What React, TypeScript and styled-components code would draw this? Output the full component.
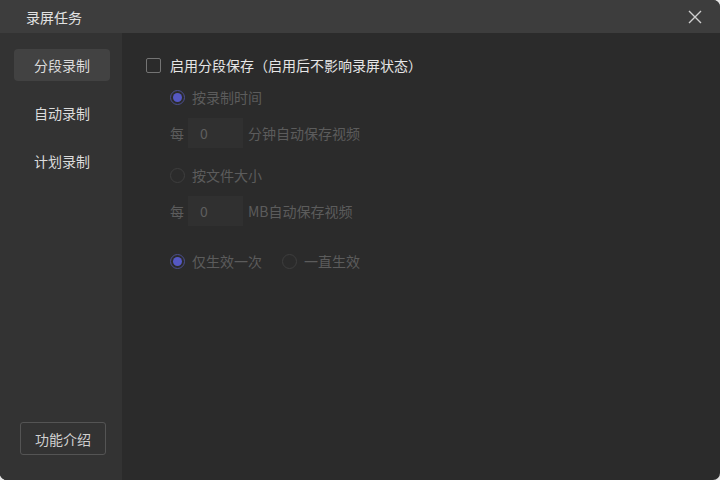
import React from "react";
import styled, { createGlobalStyle } from "styled-components";

const Global = createGlobalStyle`
  html, body {
    margin: 0;
    padding: 0;
    background: #e6e6e6;
  }
  body {
    font-family: "Noto Sans CJK SC", "Noto Sans", sans-serif;
    font-size: 14px;
  }
`;

const Window = styled.div`
  width: 720px;
  height: 480px;
  display: flex;
  flex-direction: column;
  background: #2b2b2b;
  border-radius: 0 7px 7px 7px;
  overflow: hidden;
  box-shadow: inset 2px 0 0 #262626;
`;

const TitleBar = styled.div`
  height: 33px;
  flex: none;
  display: flex;
  align-items: center;
  justify-content: space-between;
  padding: 0 15px 0 26px;
  background: #3d3d3d;
  color: #e2e2e2;
  font-size: 14px;
`;

const CloseButton = styled.button`
  width: 20px;
  height: 20px;
  padding: 0;
  border: none;
  background: transparent;
  display: flex;
  align-items: center;
  justify-content: center;
  cursor: pointer;
`;

const Body = styled.div`
  flex: 1;
  display: flex;
  min-height: 0;
`;

const Sidebar = styled.div`
  width: 122px;
  flex: none;
  background: #333333;
  display: flex;
  flex-direction: column;
  padding: 16px 0 25px 14px;
  box-sizing: border-box;
`;

const NavItem = styled.div<{ $active?: boolean }>`
  width: 96px;
  height: 32px;
  margin-bottom: 16px;
  border-radius: 4px;
  display: flex;
  align-items: center;
  justify-content: center;
  color: #dcdcdc;
  line-height: 30px;
  background: ${p => (p.$active ? "#424242" : "transparent")};
`;

const HelpButton = styled.button`
  margin-top: auto;
  margin-left: 6px;
  width: 86px;
  height: 33px;
  border: 1px solid #545454;
  border-radius: 3px;
  background: transparent;
  color: #d0d0d0;
  font: inherit;
  font-size: 14px;
`;

const Content = styled.div`
  flex: 1;
  padding: 23px 0 0 24px;
  display: flex;
  flex-direction: column;
`;

const CheckRow = styled.label`
  display: flex;
  align-items: center;
  height: 18px;
  color: #e6e6e6;
`;

const Box = styled.span`
  width: 13px;
  height: 13px;
  border: 1px solid #747474;
  border-radius: 2px;
  margin-right: 9px;
`;

const Group = styled.div`
  display: flex;
  flex-direction: column;
  padding-left: 24px;
  color: #5c5c5c;
`;

const RadioRow = styled.div<{ $top: number }>`
  display: flex;
  align-items: center;
  gap: 20px;
  height: 18px;
  margin-top: ${p => p.$top}px;
`;

const Radio = styled.span`
  display: flex;
  align-items: center;
`;

const Circle = styled.span<{ $checked?: boolean }>`
  width: 15px;
  height: 15px;
  border-radius: 50%;
  box-sizing: border-box;
  border: 1px solid ${p => (p.$checked ? "#4b4e8e" : "#3e3e3e")};
  margin-right: 7px;
  display: flex;
  align-items: center;
  justify-content: center;
  &::after {
    content: "";
    width: 9px;
    height: 9px;
    border-radius: 50%;
    background: ${p => (p.$checked ? "#5558c4" : "transparent")};
  }
`;

const InputRow = styled.div<{ $top: number }>`
  display: flex;
  align-items: center;
  margin-top: ${p => p.$top}px;
  height: 30px;
`;

const NumberBox = styled.div`
  width: 55px;
  height: 30px;
  margin: 0 5px 0 4px;
  padding-left: 12px;
  box-sizing: border-box;
  background: #303030;
  display: flex;
  align-items: center;
  color: #5e5e5e;
`;

export default function App() {
  return (
    <>
      <Global />
      <Window>
        <TitleBar>
          <span>录屏任务</span>
          <CloseButton aria-label="关闭">
            <svg width="14" height="14" viewBox="0 0 14 14">
              <path d="M1 1 L13 13 M13 1 L1 13" stroke="#cfcfcf" strokeWidth="1.4" />
            </svg>
          </CloseButton>
        </TitleBar>
        <Body>
          <Sidebar>
            <NavItem $active>分段录制</NavItem>
            <NavItem>自动录制</NavItem>
            <NavItem>计划录制</NavItem>
            <HelpButton>功能介绍</HelpButton>
          </Sidebar>
          <Content>
            <CheckRow>
              <Box />
              启用分段保存（启用后不影响录屏状态）
            </CheckRow>
            <Group>
              <RadioRow $top={14}>
                <Radio>
                  <Circle $checked />
                  按录制时间
                </Radio>
              </RadioRow>
              <InputRow $top={12}>
                每<NumberBox>0</NumberBox>分钟自动保存视频
              </InputRow>
              <RadioRow $top={18}>
                <Radio>
                  <Circle />
                  按文件大小
                </Radio>
              </RadioRow>
              <InputRow $top={12}>
                每<NumberBox>0</NumberBox>MB自动保存视频
              </InputRow>
              <RadioRow $top={26}>
                <Radio>
                  <Circle $checked />
                  仅生效一次
                </Radio>
                <Radio>
                  <Circle />
                  一直生效
                </Radio>
              </RadioRow>
            </Group>
          </Content>
        </Body>
      </Window>
    </>
  );
}
